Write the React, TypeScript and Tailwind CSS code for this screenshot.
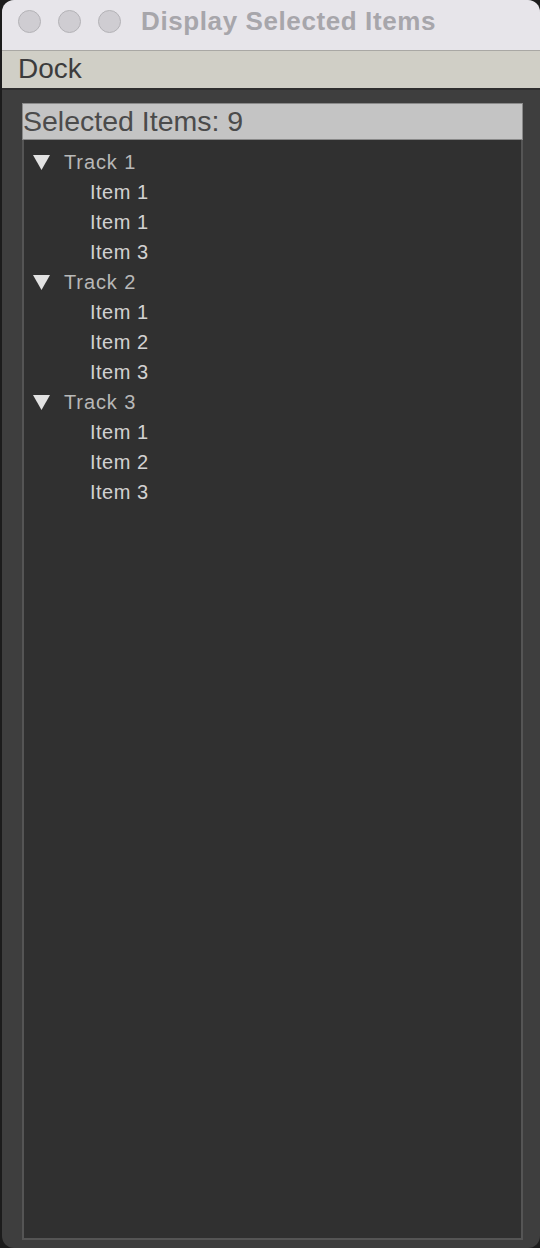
const TRACKS = [
  { name: "Track 1", items: ["Item 1", "Item 1", "Item 3"] },
  { name: "Track 2", items: ["Item 1", "Item 2", "Item 3"] },
  { name: "Track 3", items: ["Item 1", "Item 2", "Item 3"] },
];

const font = { fontFamily: '"Liberation Sans", Arial, sans-serif' };

function Triangle() {
  return (
    <svg width="17" height="15" viewBox="0 0 17 15" className="shrink-0">
      <polygon points="0,0 17,0 8.5,15" fill="#e2e2e2" />
    </svg>
  );
}

export default function App() {
  return (
    <div className="w-[540px] h-[1248px] bg-[#1c1c1c] pl-[2px] overflow-hidden" style={font}>
      <div className="flex flex-col h-full rounded-[12px] overflow-hidden bg-[#3e3e3e]">
        {/* title bar */}
        <div className="h-[51px] shrink-0 bg-[#e7e5ea] border-b border-[#a9a8a4] flex items-start pt-[10px] pl-[16px]">
          <div className="flex gap-[17px]">
            {[0, 1, 2].map((i) => (
              <span key={i} className="w-[23px] h-[23px] rounded-full bg-[#cfcdd2] border border-[#b3b2b6]" />
            ))}
          </div>
          <span className="ml-[20px] mt-[-1px] text-[26px] font-bold text-[#a7a6ab] tracking-[0.6px] leading-[24px]">Display Selected Items</span>
        </div>

        {/* dock bar */}
        <div className="h-[39px] shrink-0 bg-[#d0cfc6] border-b-2 border-[#2e2e2e] flex items-center pl-[16px] pb-[2px]">
          <span className="text-[28px] text-[#3c3c3c] leading-none">Dock</span>
        </div>

        {/* body */}
        <div className="flex-1 flex flex-col pl-[20px] pr-[17px] pt-[13px] pb-[8px]">
          <div className="h-[37px] shrink-0 bg-[#c4c4c4] border border-[#8a8a8a] flex items-center">
            <span className="text-[28.5px] text-[#4b4b4b] leading-none">Selected Items: 9</span>
          </div>
          <div className="flex-1 bg-[#303030] border-2 border-t-0 border-[#555555] pt-[7px]">
            {TRACKS.map((t) => (
              <div key={t.name}>
                <div className="h-[30px] flex items-center pl-[9px]">
                  <Triangle />
                  <span className="ml-[14px] text-[20px] text-[#b8b8b8] tracking-[0.9px] leading-none">{t.name}</span>
                </div>
                {t.items.map((it, i) => (
                  <div key={i} className="h-[30px] flex items-center pl-[66px]">
                    <span className="text-[20px] text-[#d2d2d2] tracking-[0.5px] leading-none">{it}</span>
                  </div>
                ))}
              </div>
            ))}
          </div>
        </div>
      </div>
    </div>
  );
}
